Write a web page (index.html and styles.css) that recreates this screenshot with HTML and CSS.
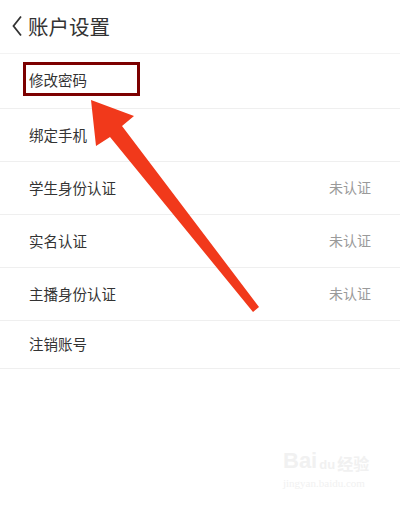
FILE: index.html
```html
<!DOCTYPE html>
<html lang="zh">
<head>
<meta charset="utf-8">
<link rel="stylesheet" href="styles.css">
</head>
<body>
<div class="page">
  <header class="topbar">
    <svg class="back" width="12" height="22" viewBox="0 0 12 22"><path d="M10 1.5 L2.5 11 L10 20.5" fill="none" stroke="#333" stroke-width="1.8"/></svg>
    <h1 class="title">账户设置</h1>
  </header>
  <ul class="list">
    <li class="row"><span>修改密码</span></li>
    <li class="row"><span>绑定手机</span></li>
    <li class="row"><span>学生身份认证</span><span class="status">未认证</span></li>
    <li class="row"><span>实名认证</span><span class="status">未认证</span></li>
    <li class="row"><span>主播身份认证</span><span class="status">未认证</span></li>
    <li class="row row-last"><span>注销账号</span></li>
  </ul>
  <div class="highlight"></div>
  <svg class="arrow" width="400" height="505" viewBox="0 0 400 505">
    <polygon points="91,100 134,116 122,126 259,307 253,312 110,137 96,146" fill="#f1391b"/>
  </svg>
  <div class="watermark">
    <div class="wm-top"><span class="wm-bai">Bai</span><span class="wm-du">du</span><span class="wm-jy">经验</span></div>
    <div class="wm-url">jingyan.baidu.com</div>
  </div>
</div>
</body>
</html>
```
FILE: styles.css
```css
html, body {
  margin: 0;
  padding: 0;
  background: #fff;
}
body {
  font-family: "Noto Sans CJK SC", "Noto Sans", sans-serif;
  color: #333;
}
.page {
  position: relative;
  width: 400px;
  height: 505px;
  overflow: hidden;
}
.topbar {
  height: 54px;
  display: flex;
  align-items: center;
  gap: 5px;
  padding-left: 11px;
  padding-bottom: 2px;
  border-bottom: 1px solid #f3f3f3;
  box-sizing: border-box;
}
.back {
  margin-top: 1px;
}
.title {
  margin: 0;
  font-size: 20.5px;
  font-weight: 400;
  color: #333;
}
.list {
  list-style: none;
  margin: 0;
  padding: 0;
}
.row {
  height: 55px;
  box-sizing: border-box;
  display: flex;
  align-items: center;
  justify-content: space-between;
  padding: 0 29px 3px 29px;
  border-bottom: 1px solid #efefef;
  font-size: 14.5px;
  color: #333;
}
.row + .row {
  height: 53px;
  padding-bottom: 2px;
}
.row.row-last {
  height: 48px;
}
.status {
  color: #9a9a9a;
  font-size: 14px;
}
.highlight {
  position: absolute;
  left: 23px;
  top: 62px;
  width: 117px;
  height: 34px;
  box-sizing: border-box;
  border: 3px solid #7c0000;
}
.arrow {
  position: absolute;
  left: 0;
  top: 0;
}
.watermark {
  position: absolute;
  left: 283px;
  top: 448px;
  color: #f1f1f1;
  font-family: "Liberation Sans", sans-serif;
}
.wm-top {
  display: flex;
  align-items: flex-end;
  gap: 2px;
  font-size: 22px;
  font-weight: 700;
  line-height: 26px;
}
.wm-du {
  font-size: 13px;
  line-height: 18px;
}
.wm-jy {
  font-family: "Noto Sans CJK SC", sans-serif;
  font-size: 16px;
  line-height: 22px;
}
.wm-url {
  font-size: 11px;
  line-height: 14px;
  font-family: "Liberation Serif", serif;
  margin-top: 2px;
}
```
